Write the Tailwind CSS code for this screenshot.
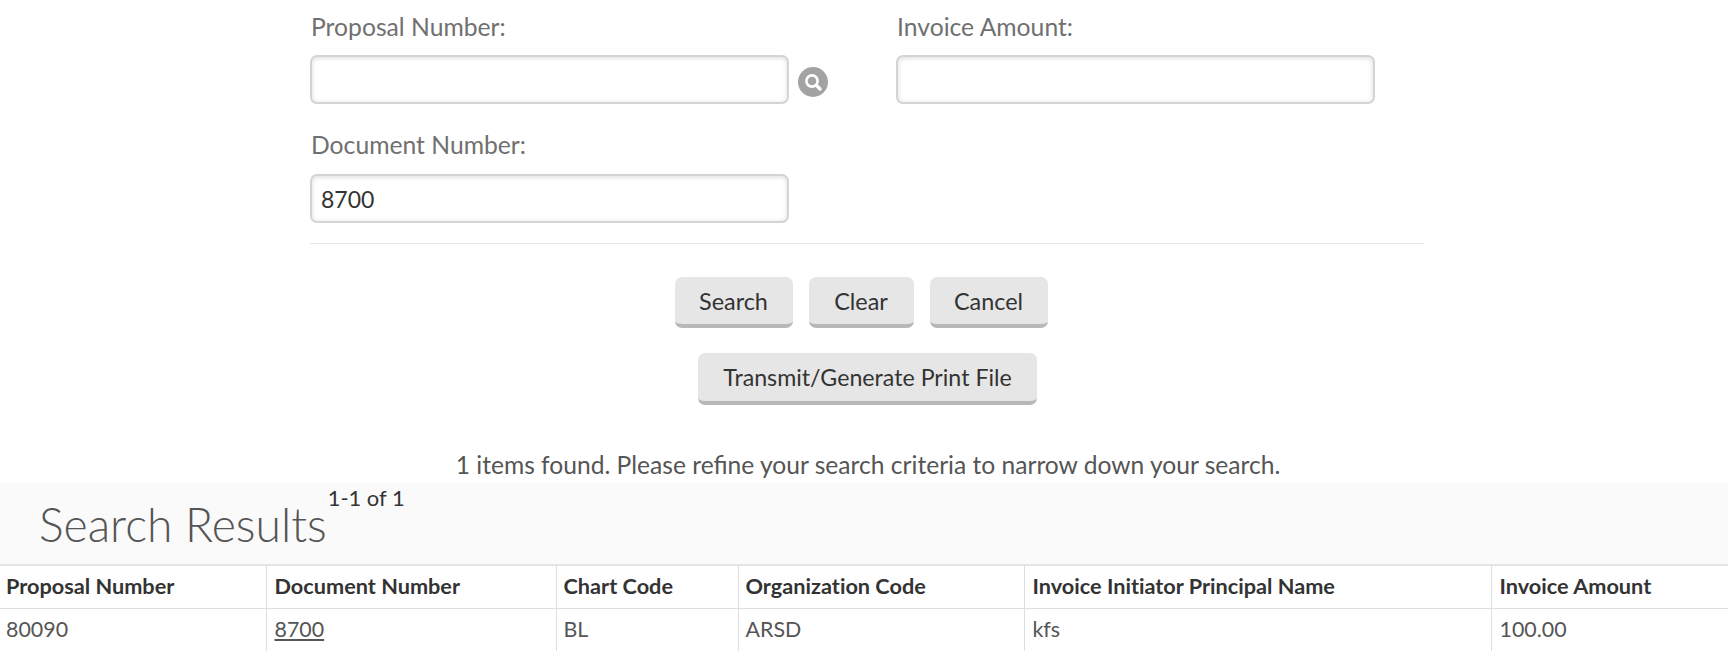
<!DOCTYPE html>
<html lang="en">
<head>
    <meta charset="UTF-8">
    <meta name="viewport" content="width=device-width, initial-scale=1.0">
    <title>Invoice Lookup</title>
    <script src="https://cdn.jsdelivr.net/npm/@tailwindcss/browser@4"></script>
</head>
<body class="bg-white font-['Lato',sans-serif] text-[#555] overflow-hidden">
    <div class="ml-[310px] w-[1114px]">
        <!-- lookup criteria -->
        <div class="grid grid-cols-[586px_479px] pt-[10px]">
            <div>
                <label for="proposal" class="block h-[45px] pl-[1px] leading-[34px] text-[24.7px] text-[#707070]">Proposal Number:</label>
                <div class="flex items-center">
                    <input type="text" id="proposal" class="h-[49px] w-[479px] rounded-[7px] border-2 border-[#d4d4d4] bg-white px-2 shadow-[inset_0_1px_5px_#dcdcdc]">
                    <span class="ml-[9px] mt-[5px] flex h-[30px] w-[30px] items-center justify-center rounded-full bg-[#a3a3a3]">
                        <svg width="24" height="24" viewBox="0 0 24 24" fill="none" stroke="#fff"><circle cx="11" cy="11" r="5.6" stroke-width="2.6"/><path d="M15.4 15.4 19 19" stroke-width="3.4" stroke-linecap="round"/></svg>
                    </span>
                </div>
            </div>
            <div>
                <label for="amount" class="block h-[45px] pl-[1px] leading-[34px] text-[24.7px] text-[#707070]">Invoice Amount:</label>
                <input type="text" id="amount" class="h-[49px] w-[479px] rounded-[7px] border-2 border-[#d4d4d4] bg-white px-2 shadow-[inset_0_1px_5px_#dcdcdc]">
            </div>
            <div class="col-span-2 pt-[22px]">
                <label for="docnum" class="block h-[48px] pl-[1px] leading-[38px] text-[24.7px] text-[#707070]">Document Number:</label>
                <input type="text" id="docnum" value="8700" class="h-[49px] w-[479px] rounded-[7px] border-2 border-[#d4d4d4] bg-white px-[9px] text-[23px] text-[#333] shadow-[inset_0_1px_5px_#dcdcdc]">
            </div>
        </div>
        <hr class="mt-[20px] border-t border-[#e5e5e5]">
    </div>

    <!-- actions -->
    <div class="mt-[33px] flex justify-center gap-4 pr-[6px]">
        <button class="h-[51px] w-[118px] rounded-[7px] border-b-[4px] border-[#b8b8b8] bg-[#e6e6e6] pt-[2px] text-[23.4px] text-[#333]">Search</button>
        <button class="h-[51px] w-[105px] rounded-[7px] border-b-[4px] border-[#b8b8b8] bg-[#e6e6e6] pt-[2px] text-[23.4px] text-[#333]">Clear</button>
        <button class="h-[51px] w-[118px] rounded-[7px] border-b-[4px] border-[#b8b8b8] bg-[#e6e6e6] pt-[2px] text-[23.4px] text-[#333]">Cancel</button>
    </div>
    <div class="mt-[25px] flex justify-center pl-[7px]">
        <button class="h-[52px] w-[339px] rounded-[7px] border-b-[4px] border-[#b8b8b8] bg-[#e6e6e6] text-[23.2px] text-[#333]">Transmit/Generate Print File</button>
    </div>

    <p class="mt-[46px] h-[31px] pl-[8px] text-center text-[24.6px] leading-[28px] text-[#555]">1 items found. Please refine your search criteria to narrow down your search.</p>

    <!-- results -->
    <div class="flex h-[84px] items-start border-b-2 border-[#e4e4e4] bg-[#fafafa] pl-[39px]">
        <h2 class="mt-[14px] text-[46.3px] leading-[56px] font-light text-[#555]">Search Results</h2>
        <span class="mt-[1px] ml-[1px] text-[21.9px] leading-[30px] text-[#333]">1-1 of 1</span>
    </div>
    <table class="w-[1728px] table-fixed border-collapse text-[21.4px] [font-variant-ligatures:none]">
        <colgroup>
            <col class="w-[266px]"><col class="w-[290px]"><col class="w-[182px]"><col class="w-[286px]"><col class="w-[467px]"><col>
        </colgroup>
        <thead>
            <tr class="h-[42px] border-b border-[#dedede] text-left text-[21.7px] text-[#333]">
                <th class="pb-[1px] pl-[6px] font-bold">Proposal Number</th>
                <th class="border-l border-[#dedede] pb-[1px] pl-[8px] font-bold">Document Number</th>
                <th class="border-l border-[#dedede] pb-[1px] pl-[7px] font-bold">Chart Code</th>
                <th class="border-l border-[#dedede] pb-[1px] pl-[7px] font-bold">Organization Code</th>
                <th class="border-l border-[#dedede] pb-[1px] pl-[8px] font-bold">Invoice Initiator Principal Name</th>
                <th class="border-l border-[#dedede] pb-[1px] pl-[8px] font-bold">Invoice Amount</th>
            </tr>
        </thead>
        <tbody>
            <tr class="h-[43px] border-b border-[#dedede]">
                <td class="pl-[6px]">80090</td>
                <td class="border-l border-[#dedede] pl-[8px]"><a href="#" class="underline">8700</a></td>
                <td class="border-l border-[#dedede] pl-[7px]">BL</td>
                <td class="border-l border-[#dedede] pl-[7px]">ARSD</td>
                <td class="border-l border-[#dedede] pl-[8px]">kfs</td>
                <td class="border-l border-[#dedede] pl-[8px]">100.00</td>
            </tr>
        </tbody>
    </table>
</body>
</html>
